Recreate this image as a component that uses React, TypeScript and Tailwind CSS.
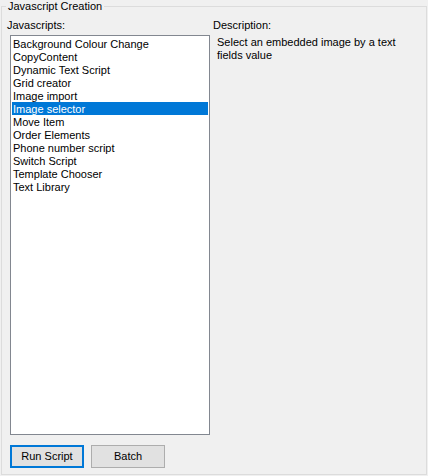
import { useState } from 'react'

const scripts = [
  'Background Colour Change',
  'CopyContent',
  'Dynamic Text Script',
  'Grid creator',
  'Image import',
  'Image selector',
  'Move Item',
  'Order Elements',
  'Phone number script',
  'Switch Script',
  'Template Chooser',
  'Text Library',
]

export default function App() {
  const [selected, setSelected] = useState('Image selector')

  return (
    <div className="w-[428px] h-[476px] bg-[#f0f0f0] text-[11px] leading-[13px] text-black font-['Liberation_Sans',Arial,sans-serif] pt-0">
      <fieldset className="mx-[1px] h-[475px] border border-[#dcdcdc] pl-[4px] pr-[4px]">
        <legend className="px-[2px]">Javascript Creation</legend>

        <div className="flex pt-[5px]">
          {/* Script list */}
          <div className="w-[204px] shrink-0">
            <div className="pl-[1px] pt-[1px] h-[13px]">Javascripts:</div>
            <div className="ml-[4px] mt-[4px] w-[200px] h-[400px] border border-[#828790] bg-white p-[1px]">
              {scripts.map((name) => (
                <div
                  key={name}
                  onClick={() => setSelected(name)}
                  className={
                    name === selected
                      ? 'h-[13px] pt-[1px] pl-[1px] bg-[#0078d7] text-white whitespace-nowrap overflow-hidden'
                      : 'h-[13px] pt-[1px] pl-[1px] whitespace-nowrap overflow-hidden'
                  }
                >
                  {name}
                </div>
              ))}
            </div>
          </div>

          {/* Description */}
          <div className="ml-[3px] flex-1">
            <div className="h-[13px] pt-[1px]">Description:</div>
            <p className="mt-[5px] pl-[4px] w-[200px]">Select an embedded image by a text fields value</p>
          </div>
        </div>

        <div className="flex gap-[7px] ml-[4px] mt-[10px]">
          <button className="w-[74px] h-[23px] border-2 border-[#0078d7] bg-[#e1e1e1] leading-[13px]">Run Script</button>
          <button className="w-[74px] h-[23px] border border-[#adadad] bg-[#e1e1e1] leading-[13px]">Batch</button>
        </div>
      </fieldset>
    </div>
  )
}
